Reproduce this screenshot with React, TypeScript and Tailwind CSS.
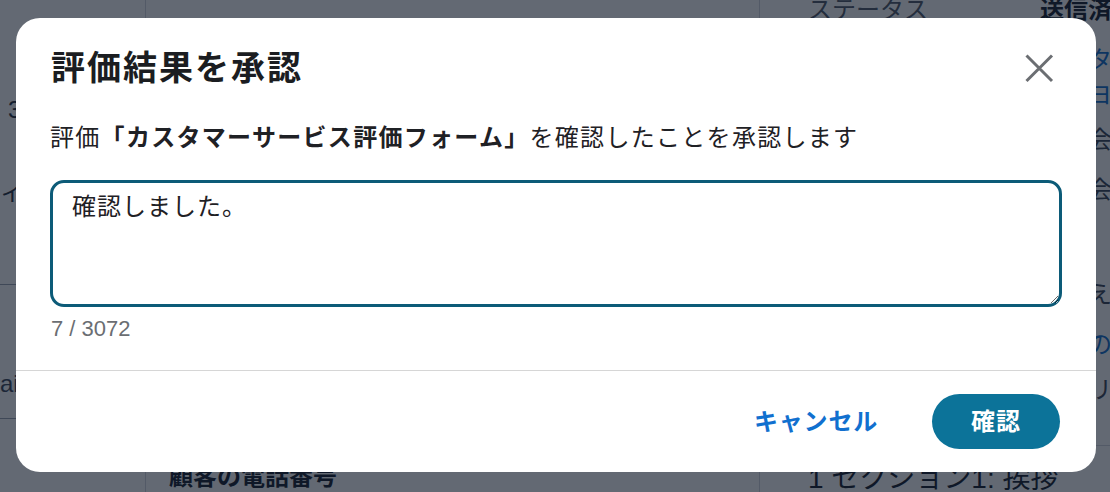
import React from "react";

const font = { fontFamily: '"Liberation Sans", "Noto Sans CJK JP", sans-serif' };

function CloseIcon() {
  return (
    <svg width="30" height="30" viewBox="0 0 30 30" fill="none">
      <path d="M2.5 2.5 L28 28 M28 2.5 L2.5 28" stroke="#6b6e72" strokeWidth="3" strokeLinecap="butt" />
    </svg>
  );
}

function Row({ label, value, blue, mt, bold }: { label?: string; value: string; blue?: boolean; mt: string; bold?: boolean }) {
  return (
    <div className={`flex leading-[32px] text-[24px] ${mt}`}>
      <div className="w-[232px] shrink-0 text-gray-600 whitespace-nowrap">{label}</div>
      <div
        className={`shrink-0 whitespace-nowrap ${blue ? "text-[#0b6bcb]" : "text-gray-700"} ${bold ? "font-bold text-gray-900" : ""}`}
      >
        {value}
      </div>
    </div>
  );
}

export default function App() {
  return (
    <div className="relative w-[1110px] h-[492px] overflow-hidden bg-white flex" style={font}>
      {/* page behind the dialog */}
      <div className="w-[146px] shrink-0 border-r border-gray-300 flex flex-col text-[24px] text-gray-800 overflow-hidden">
        <div className="mt-[94px] pl-[8px] leading-[32px] whitespace-nowrap">3 件の回答</div>
        <div className="mt-[50px] leading-[32px] whitespace-nowrap">ィー</div>
        <div className="mt-[76px] border-b border-gray-400" />
        <div className="mt-[83px] leading-[32px] whitespace-nowrap text-gray-700">aiko@example.com</div>
        <div className="mt-[18px] border-b border-gray-400" />
      </div>

      <div className="w-[613px] shrink-0 pl-[23px] flex flex-col">
        <div className="mt-[461px] text-[24px] leading-[32px] font-bold text-gray-900 whitespace-nowrap">
          顧客の電話番号
        </div>
      </div>

      <div className="flex-1 border-l border-gray-300 pl-[48px] flex flex-col overflow-hidden">
        <Row label="ステータス" value="送信済み" mt="-mt-[6px]" bold />
        <Row label="フォーム" value="カスタマー" blue mt="mt-[18px]" />
        <Row label="" value="山田ヨウコ" blue mt="mt-[3px]" />
        <Row label="会社" value="株式会社" mt="mt-[13px]" />
        <Row label="部署" value="合同会社" mt="mt-[18px]" />
        <Row label="匿名" value="いいえ" mt="mt-[73px]" />
        <Row label="" value="評価の詳細" blue mt="mt-[18px]" />
        <Row label="" value="メモリ" mt="mt-[13px]" />
        <div className="mt-[39px] border-b border-gray-300 -ml-[48px]" />
        <div className="mt-[16px] text-[28px] leading-[34px] text-gray-900 whitespace-nowrap">
          1 セクション1: 挨拶
        </div>
      </div>

      {/* overlay + dialog */}
      <div className="absolute inset-0 bg-gray-900/65 flex justify-center items-start pt-[18px] pl-[2px]">
        <div className="w-[1080px] h-[454px] bg-white rounded-[24px] flex flex-col">
          <div className="flex items-center justify-between pl-[35px] pr-[42px] pt-[29px]">
            <h2 className="text-[34px] leading-[42px] font-bold tracking-[2px] text-[#1b1d21]">評価結果を承認</h2>
            <button type="button" className="w-[30px] h-[30px] flex items-center justify-center">
              <CloseIcon />
            </button>
          </div>

          <div className="px-[34px]">
            <p className="mt-[33px] text-[24px] leading-[32px] tracking-[1.3px] text-[#1f2125] whitespace-nowrap">
              評価<span className="font-bold">「カスタマーサービス評価フォーム」</span>を確認したことを承認します
            </p>

            <textarea
              defaultValue="確認しました。"
              className="mt-[26px] block w-full h-[127px] border-[3px] border-[#0c5b78] rounded-[14px] px-[19px] pt-[9px] text-[24px] leading-[30px] tracking-[1px] text-[#1f2125] outline-none"
              style={font}
            />
            <div className="mt-[9px] pl-[1px] text-[22px] leading-[26px] text-[#6b6e72]">7 / 3072</div>
          </div>

          <div className="mt-auto h-[102px] border-t border-[#d6d6d6] flex items-center justify-end gap-[54px] pr-[36px]">
            <button type="button" className="text-[24px] font-bold tracking-[0.8px] text-[#1170cf]">
              キャンセル
            </button>
            <button
              type="button"
              className="w-[128px] h-[55px] rounded-full bg-[#0c7399] text-white text-[24px] font-bold tracking-[1px]"
            >
              確認
            </button>
          </div>
        </div>
      </div>
    </div>
  );
}
